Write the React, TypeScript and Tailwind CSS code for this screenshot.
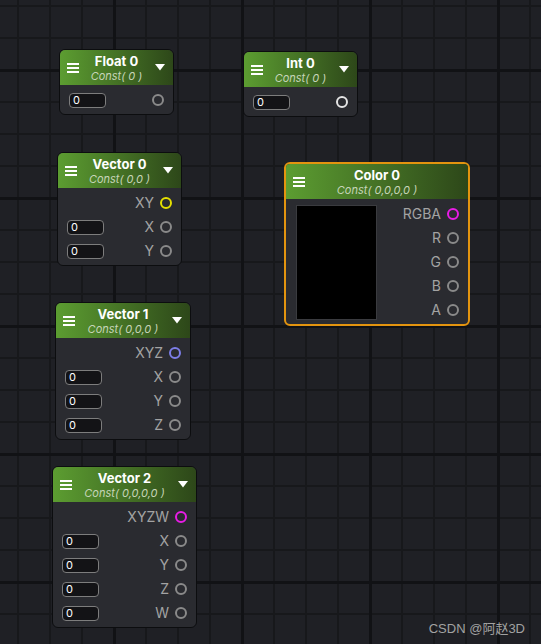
import React from "react";

type Row = { label?: string; input?: boolean; port: string };

type NodeProps = {
  box: string;
  title: string;
  sub: string;
  rows: Row[];
  arrow?: boolean;
  selected?: boolean;
  preview?: boolean;
};

const font = { fontFamily: "Inter, 'Noto Sans', sans-serif" };

function Hamburger() {
  return (
    <svg width="12" height="10" viewBox="0 0 12 10" className="block">
      <rect x="0" y="0" width="12" height="2" fill="#fff" />
      <rect x="0" y="4" width="12" height="2" fill="#fff" />
      <rect x="0" y="8" width="12" height="2" fill="#fff" />
    </svg>
  );
}

function Arrow() {
  return (
    <svg width="10" height="7" viewBox="0 0 10 7" className="block">
      <polygon points="0,0 10,0 5,6.5" fill="#fff" />
    </svg>
  );
}

function PortRow({ row }: { row: Row }) {
  return (
    <div className="flex h-[24px] items-center pl-[9px] pr-[9px]">
      {row.input ? (
        <div className="flex h-[15px] w-[37px] items-center rounded-[4px] border border-[#7d7d7d] bg-[#131316] pl-[3px] text-[11px] leading-none text-white">
          0
        </div>
      ) : null}
      <div className="flex-1" />
      {row.label ? <span className="text-[14px] leading-none text-[#a3a3a3]">{row.label}</span> : null}
      <div className={`ml-[6px] h-[12px] w-[12px] rounded-full border-[2.5px] ${row.port}`} />
    </div>
  );
}

function Node({ box, title, sub, rows, arrow = true, selected = false, preview = false }: NodeProps) {
  return (
    <div
      className={`absolute overflow-hidden rounded-[6px] bg-[#2a2b30] ${
        selected ? "border-2 border-[#e3940f]" : "border border-[#0c0d0f]"
      } ${box}`}
    >
      <div className="grid h-[35px] grid-cols-[28px_1fr_28px] items-center bg-[linear-gradient(to_right,#5c9d31,#2d4719)]">
        <div className="pl-[7px]">
          <Hamburger />
        </div>
        <div className="flex flex-col items-center pt-[2px] text-center">
          <span className="text-[13px] font-bold leading-[15px] text-white">{title}</span>
          <span className="whitespace-pre text-[11px] italic leading-[14px] text-[#c6d5b8]">{sub}</span>
        </div>
        <div className="flex justify-end pr-[8px]">{arrow ? <Arrow /> : null}</div>
      </div>
      <div className="flex pb-[2px] pt-[3px]">
        {preview ? (
          <div className="ml-[10px] mt-[3px] h-[115px] w-[81px] shrink-0 border border-[#3a3b3f] bg-black" />
        ) : null}
        <div className="flex flex-1 flex-col">
          {rows.map((r, i) => (
            <PortRow key={i} row={r} />
          ))}
        </div>
      </div>
    </div>
  );
}

const gray = "border-[#8a8a8a]";

export default function App() {
  return (
    <div className="relative h-[644px] w-[541px] overflow-hidden bg-[#1f2025]" style={font}>
      <div className="absolute inset-0 bg-[image:linear-gradient(to_right,#111215_0,#111215_3px,transparent_3px),linear-gradient(to_bottom,#111215_0,#111215_3px,transparent_3px),linear-gradient(to_right,#17181b_0,#17181b_2px,transparent_2px),linear-gradient(to_bottom,#17181b_0,#17181b_2px,transparent_2px)] bg-size-[128px_128px,128px_128px,32px_32px,32px_32px] bg-position-[113px_0,0_69px,17px_0,0_5px]" />

      <Node
        box="left-[59px] top-[49px] w-[115px]"
        title="Float 0"
        sub="Const( 0 )"
        rows={[{ input: true, port: gray }]}
      />
      <Node
        box="left-[243px] top-[51px] w-[115px]"
        title="Int 0"
        sub="Const( 0 )"
        rows={[{ input: true, port: "border-[#e4e4e4]" }]}
      />
      <Node
        box="left-[57px] top-[152px] w-[125px]"
        title="Vector 0"
        sub="Const( 0,0 )"
        rows={[
          { label: "XY", port: "border-[#e5df00]" },
          { label: "X", input: true, port: gray },
          { label: "Y", input: true, port: gray },
        ]}
      />
      <Node
        box="left-[55px] top-[302px] w-[136px]"
        title="Vector 1"
        sub="Const( 0,0,0 )"
        rows={[
          { label: "XYZ", port: "border-[#7d7ee8]" },
          { label: "X", input: true, port: gray },
          { label: "Y", input: true, port: gray },
          { label: "Z", input: true, port: gray },
        ]}
      />
      <Node
        box="left-[52px] top-[466px] w-[145px]"
        title="Vector 2"
        sub="Const( 0,0,0,0 )"
        rows={[
          { label: "XYZW", port: "border-[#e81ce6]" },
          { label: "X", input: true, port: gray },
          { label: "Y", input: true, port: gray },
          { label: "Z", input: true, port: gray },
          { label: "W", input: true, port: gray },
        ]}
      />
      <Node
        box="left-[284px] top-[162px] w-[186px]"
        title="Color 0"
        sub="Const( 0,0,0,0 )"
        arrow={false}
        selected
        preview
        rows={[
          { label: "RGBA", port: "border-[#e81ce6]" },
          { label: "R", port: gray },
          { label: "G", port: gray },
          { label: "B", port: gray },
          { label: "A", port: gray },
        ]}
      />

      <div
        className="absolute bottom-[9px] right-[16px] text-[13px] leading-none text-[#a2a2a2]"
        style={{ fontFamily: "'Liberation Sans', 'Noto Sans CJK SC', sans-serif" }}
      >
        CSDN @阿赵3D
      </div>
    </div>
  );
}
